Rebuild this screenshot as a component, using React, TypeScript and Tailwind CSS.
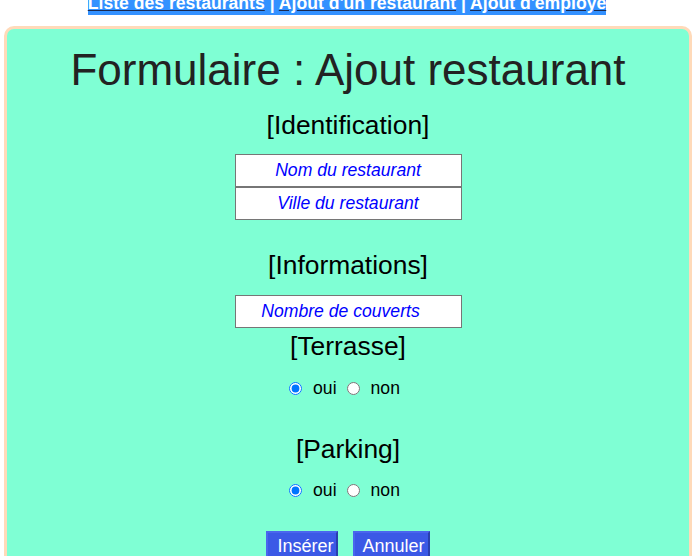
import React from "react";

const links = ["Liste des restaurants", "Ajout d'un restaurant", "Ajout d'employé"];

function Heading({ children, className = "" }: { children: React.ReactNode; className?: string }) {
  return (
    <h3 className={`text-center text-[26.4px] leading-[30px] text-black ${className}`}>{children}</h3>
  );
}

function Field({ placeholder, className = "" }: { placeholder: string; className?: string }) {
  return (
    <input
      type="text"
      placeholder={placeholder}
      className={`h-[33px] w-[227px] border border-[#767676] bg-white text-center text-[17.6px] italic text-[#0000ff] outline-none placeholder:text-[#0000ff] ${className}`}
    />
  );
}

function YesNo({ name }: { name: string }) {
  return (
    <div className="flex items-center justify-center pr-[7px] text-[17.6px] leading-[20px] text-black">
      <input type="radio" name={name} defaultChecked className="m-0 h-[13px] w-[13px]" />
      <span className="ml-[11px]">oui</span>
      <input type="radio" name={name} className="m-0 ml-[10px] h-[13px] w-[13px]" />
      <span className="ml-[11px]">non</span>
    </div>
  );
}

export default function App() {
  return (
    <div className="min-h-[556px] bg-white font-['Liberation_Sans',Arial,sans-serif]">
      <div className="-mt-[7px] text-center text-[17.6px] font-bold leading-[20px]">
        <span className="bg-[#3391ff] pb-[2px] text-white">
          {links.map((l, i) => (
            <React.Fragment key={l}>
              {i > 0 && " | "}
              <a href="#" className="underline decoration-[#1a2a50] underline-offset-[1px]">
                {l}
              </a>
            </React.Fragment>
          ))}
        </span>
      </div>

      <form className="ml-[4px] mr-[2px] mt-[13px] rounded-[10px] border-[3px] border-[#ffdab9] bg-[#7fffd4] pb-[20px] pt-[16px]">
        <h1 className="text-center text-[44px] leading-[50px] text-[#222]">Formulaire : Ajout restaurant</h1>

        <Heading className="mt-[15px]">[Identification]</Heading>
        <div className="mt-[14px] flex flex-col items-center">
          <Field placeholder="Nom du restaurant" />
          <Field placeholder="Ville du restaurant" />
        </div>

        <Heading className="mt-[30px]">[Informations]</Heading>
        <div className="mt-[15px] flex flex-col items-center">
          <Field placeholder="Nombre de couverts" className="pr-[15px]" />
        </div>

        <Heading className="mt-[3px]">[Terrasse]</Heading>
        <div className="mt-[17px]">
          <YesNo name="terrasse" />
        </div>

        <Heading className="mt-[36px]">[Parking]</Heading>
        <div className="mt-[16px]">
          <YesNo name="parking" />
        </div>

        <div className="mt-[31px] flex justify-center gap-[15px]">
          <button
            type="submit"
            className="border-2 border-b-[#2a3fae] border-l-[#4a66ee] border-r-[#2a3fae] border-t-[#4a66ee] bg-[#3b59e6] pb-[4px] pl-[9px] pr-[3px] pt-[3px] text-[18px] leading-[21px] text-white"
          >
            Insérer
          </button>
          <button
            type="reset"
            className="border-2 border-b-[#2a3fae] border-l-[#4a66ee] border-r-[#2a3fae] border-t-[#4a66ee] bg-[#3b59e6] pb-[4px] pl-[7px] pr-[3px] pt-[3px] text-[18px] leading-[21px] text-white"
          >
            Annuler
          </button>
        </div>
      </form>
    </div>
  );
}
